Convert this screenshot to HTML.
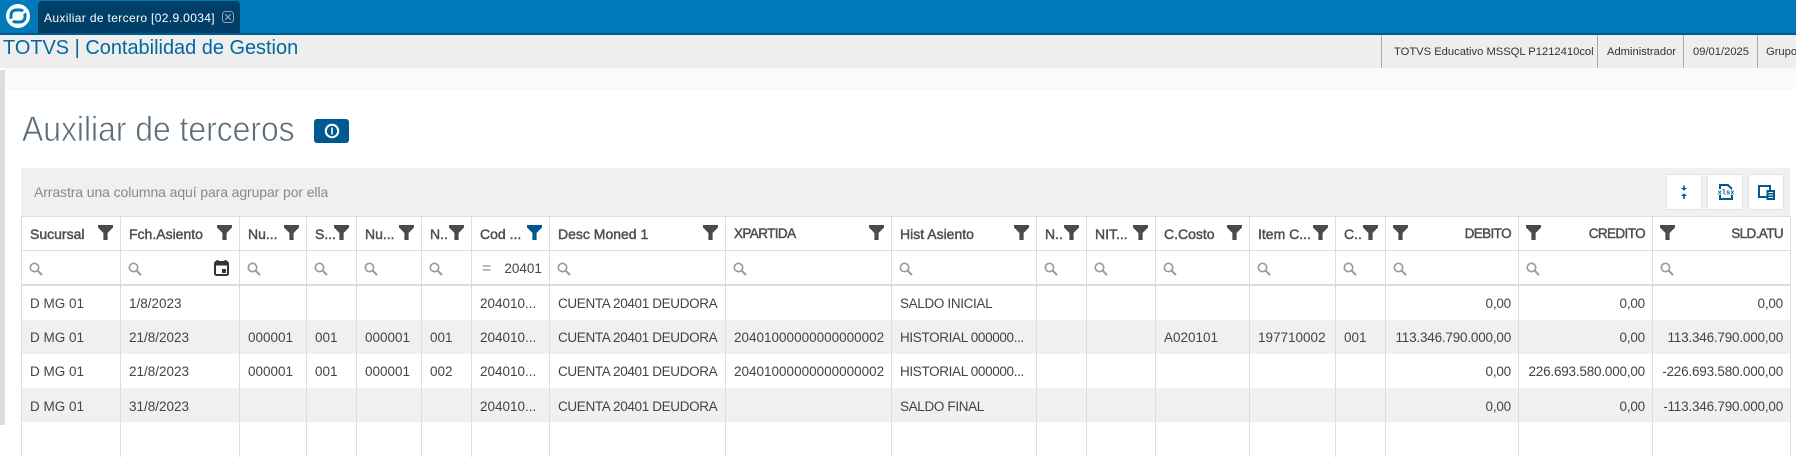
<!DOCTYPE html>
<html lang="es"><head><meta charset="utf-8"><title>Auxiliar de terceros</title>
<style>
*{box-sizing:border-box}
html,body{margin:0;padding:0}
body{width:1796px;height:425px;overflow:hidden;background:#fff;position:relative;font-family:"Liberation Sans",Arial,sans-serif}
.a{position:absolute}
#top{left:0;top:0;width:1796px;height:33px;background:#0079b8}
#line{left:0;top:33px;width:1796px;height:2px;background:#005a8c}
#tab{left:38px;top:1px;width:202px;height:32px;background:#004068;border-radius:4px 4px 0 0}
#tabt{left:44px;top:10px;color:#fff;font-size:12px;letter-spacing:.35px;white-space:nowrap;line-height:16px}
#bar{left:0;top:35px;width:1796px;height:33px;background:#eee}
#app{left:3px;top:37px;font-size:19.95px;line-height:22px;color:#0068a0;white-space:nowrap}
.sep{top:35px;width:1px;height:33px;background:#aaa;border-radius:2px}
.st{top:45px;font-size:11.2px;line-height:14px;color:#333;white-space:nowrap}
#band{left:5px;top:68px;width:1791px;height:22px;background:#fafafa}
#strip{left:0;top:70px;width:5px;height:355px;background:#ddd}
#title{left:22px;top:108px;font-size:35px;line-height:44px;color:#5a6d7a;white-space:nowrap;transform:scaleX(.91);transform-origin:0 0;-webkit-text-stroke:.7px #fff}
#info{left:314px;top:119px;width:35px;height:24px;background:#00598f;border-radius:3px}
#tb{left:21px;top:168px;width:1769px;height:48px;background:#f0f0f0}
#hint{left:34px;top:184px;font-size:14px;line-height:17px;color:#888;white-space:nowrap;letter-spacing:-.1px}
.btn{top:174px;width:36px;height:36px;background:#fff;border:1px solid #e2e2e2}
table{position:absolute;left:21px;top:216px;width:1769px;table-layout:fixed;border-collapse:collapse;font-size:13.5px;color:#444}
td,th{border-left:1px solid #ddd;border-right:1px solid #ddd;padding:0 7px 0 8px;white-space:nowrap;overflow:hidden;position:relative;text-align:left;font-weight:normal}
thead tr.h th{height:34px;border-top:1px solid #ddd;border-bottom:1px solid #ddd;font-weight:normal;color:#4f4f4f;font-size:14px;-webkit-text-stroke:.45px #4f4f4f}
thead tr.h th.c{font-size:13.5px;letter-spacing:-.6px}
thead tr.f th{height:34px;border-bottom:2px solid #ddd}
tbody td{height:34.3px;padding-top:2px}
tbody tr:first-child td{height:35px}
tbody tr:nth-child(even) td{background:#f0f0f0}
.r{text-align:right}
td.r{letter-spacing:-.2px}
.k{letter-spacing:-.35px}
svg{display:block}
.fn{position:absolute;top:8px;width:15px;height:15px;right:7px}
.fl{left:7px;right:auto}
.se{position:absolute;left:7px;top:11px;width:14px;height:14px}
</style></head><body>
<svg width="0" height="0" style="position:absolute"><defs>
<symbol id="fu" viewBox="0 0 15 15"><path d="M0 0H15V2.5L9.6 8V15H5.4V8L0 2.5Z"/></symbol>
<symbol id="sr" viewBox="0 0 14 14"><circle cx="5.5" cy="5.5" r="4.2" fill="none" stroke="#999" stroke-width="1.6"/><path d="M8.8 8.8L13 13" stroke="#999" stroke-width="2"/></symbol>
</defs></svg>
<div class="a" id="top"></div><div class="a" id="line"></div>
<svg class="a" style="left:6px;top:4px" width="24" height="24" viewBox="0 0 24 24"><circle cx="12" cy="12" r="12" fill="#fff"/><rect x="5" y="6" width="14" height="12" rx="5" fill="none" stroke="#0079b8" stroke-width="3"/><path d="M3.5 15.5L7.5 13.8L8.5 15.2L5.5 18.5Z" fill="#fff"/><path d="M20.5 8.5L16.5 10.2L15.5 8.8L18.5 5.5Z" fill="#fff"/></svg>
<div class="a" id="tab"></div>
<div class="a" id="tabt">Auxiliar de tercero [02.9.0034]</div>
<svg class="a" style="left:222px;top:11px" width="12" height="12" viewBox="0 0 12 12"><rect x=".5" y=".5" width="11" height="11" rx="3" fill="none" stroke="#8ba3b3"/><path d="M3.3 3.3L8.7 8.7M8.7 3.3L3.3 8.7" stroke="#8ba3b3" stroke-width="1.3"/></svg>
<div class="a" id="bar"></div>
<div class="a" id="app">TOTVS | Contabilidad de Gestion</div>
<div class="a sep" style="left:1381px"></div><div class="a sep" style="left:1597px"></div><div class="a sep" style="left:1683px"></div><div class="a sep" style="left:1757px"></div>
<div class="a st" style="left:1394px">TOTVS Educativo MSSQL P1212410col</div>
<div class="a st" style="left:1607px">Administrador</div>
<div class="a st" style="left:1693px">09/01/2025</div>
<div class="a st" style="left:1766px">Grupo</div>
<div class="a" id="band"></div><div class="a" id="strip"></div>
<div class="a" id="title">Auxiliar de terceros</div>
<div class="a" id="info"><svg style="margin:4px 0 0 10px" width="16" height="16" viewBox="0 0 16 16"><circle cx="8" cy="8" r="6.2" fill="none" stroke="#fff" stroke-width="2"/><rect x="7.2" y="4.5" width="1.6" height="7" fill="#fff"/></svg></div>
<div class="a" id="tb"></div>
<div class="a" id="hint">Arrastra una columna aquí para agrupar por ella</div>
<div class="a btn" style="left:1666px"><svg width="34" height="34" viewBox="0 0 34 34"><path d="M17 10.5V13" stroke="#00598f" stroke-width="1.6"/><path d="M14 13H20L17 15.8Z" fill="#00598f"/><path d="M17 21V24" stroke="#00598f" stroke-width="1.6"/><path d="M14 21H20L17 18.2Z" fill="#00598f"/></svg></div>
<div class="a btn" style="left:1707px"><svg width="34" height="34" viewBox="0 0 34 34"><path d="M12 14V10H20L24 14M12 20V24H24V20" fill="none" stroke="#00598f" stroke-width="2"/><text x="18" y="19.5" font-family="Liberation Mono" font-size="7" font-weight="bold" fill="#00598f" text-anchor="middle">xlsx</text></svg></div>
<div class="a btn" style="left:1748px"><svg width="34" height="34" viewBox="0 0 34 34"><path d="M10 11H21V22H10Z" fill="#fff" stroke="#00598f" stroke-width="2"/><rect x="17.5" y="15" width="8.5" height="10" fill="#00598f"/><path d="M19.5 17.5H24M19.5 20H24M19.5 22.5H24" stroke="#fff"/></svg></div>
<table>
<colgroup><col style="width:99px"><col style="width:119px"><col style="width:67px"><col style="width:50px"><col style="width:65px"><col style="width:50px"><col style="width:78px"><col style="width:176px"><col style="width:166px"><col style="width:145px"><col style="width:50px"><col style="width:69px"><col style="width:94px"><col style="width:86px"><col style="width:50px"><col style="width:133px"><col style="width:134px"><col style="width:138px"></colgroup>
<thead>
<tr class="h">
<th>Sucursal<svg class="fn" fill="#4a4a4a"><use href="#fu"/></svg></th>
<th>Fch.Asiento<svg class="fn" fill="#4a4a4a"><use href="#fu"/></svg></th>
<th>Nu...<svg class="fn" fill="#4a4a4a"><use href="#fu"/></svg></th>
<th>S...<svg class="fn" fill="#4a4a4a"><use href="#fu"/></svg></th>
<th>Nu...<svg class="fn" fill="#4a4a4a"><use href="#fu"/></svg></th>
<th>N..<svg class="fn" fill="#4a4a4a"><use href="#fu"/></svg></th>
<th>Cod ...<svg class="fn" fill="#00588f"><use href="#fu"/></svg></th>
<th>Desc Moned 1<svg class="fn" fill="#4a4a4a"><use href="#fu"/></svg></th>
<th class="c">XPARTIDA<svg class="fn" fill="#4a4a4a"><use href="#fu"/></svg></th>
<th>Hist Asiento<svg class="fn" fill="#4a4a4a"><use href="#fu"/></svg></th>
<th>N..<svg class="fn" fill="#4a4a4a"><use href="#fu"/></svg></th>
<th>NIT...<svg class="fn" fill="#4a4a4a"><use href="#fu"/></svg></th>
<th>C.Costo<svg class="fn" fill="#4a4a4a"><use href="#fu"/></svg></th>
<th>Item C...<svg class="fn" fill="#4a4a4a"><use href="#fu"/></svg></th>
<th>C..<svg class="fn" fill="#4a4a4a"><use href="#fu"/></svg></th>
<th class="r c"><svg class="fn fl" fill="#4a4a4a"><use href="#fu"/></svg>DEBITO</th>
<th class="r c"><svg class="fn fl" fill="#4a4a4a"><use href="#fu"/></svg>CREDITO</th>
<th class="r c"><svg class="fn fl" fill="#4a4a4a"><use href="#fu"/></svg>SLD.ATU</th>
</tr>
<tr class="f">
<th><svg class="se"><use href="#sr"/></svg></th>
<th><svg class="se"><use href="#sr"/></svg><svg style="position:absolute;right:10px;top:9px" width="15" height="16" viewBox="0 0 15 16"><path d="M3.5 0V2M11.5 0V2" stroke="#333" stroke-width="2"/><rect x="1" y="2" width="13" height="13" rx="1.5" fill="#fff" stroke="#333" stroke-width="2"/><rect x="1" y="2" width="13" height="3.5" fill="#333"/><rect x="8" y="9" width="4" height="4" fill="#333"/></svg></th>
<th><svg class="se"><use href="#sr"/></svg></th>
<th><svg class="se"><use href="#sr"/></svg></th>
<th><svg class="se"><use href="#sr"/></svg></th>
<th><svg class="se"><use href="#sr"/></svg></th>
<th style="font-size:13.5px;color:#444;padding:3px 0 0 10px"><span style="color:#888;font-size:16px;margin-right:13px">=</span>20401</th>
<th><svg class="se"><use href="#sr"/></svg></th>
<th><svg class="se"><use href="#sr"/></svg></th>
<th><svg class="se"><use href="#sr"/></svg></th>
<th><svg class="se"><use href="#sr"/></svg></th>
<th><svg class="se"><use href="#sr"/></svg></th>
<th><svg class="se"><use href="#sr"/></svg></th>
<th><svg class="se"><use href="#sr"/></svg></th>
<th><svg class="se"><use href="#sr"/></svg></th>
<th><svg class="se"><use href="#sr"/></svg></th>
<th><svg class="se"><use href="#sr"/></svg></th>
<th><svg class="se"><use href="#sr"/></svg></th>
</tr>
</thead>
<tbody>
<tr><td>D MG 01</td><td>1/8/2023</td><td></td><td></td><td></td><td></td><td>204010...</td><td class="k">CUENTA 20401 DEUDORA</td><td></td><td class="k">SALDO INICIAL</td><td></td><td></td><td></td><td></td><td></td><td class="r">0,00</td><td class="r">0,00</td><td class="r">0,00</td></tr>
<tr><td>D MG 01</td><td>21/8/2023</td><td>000001</td><td>001</td><td>000001</td><td>001</td><td>204010...</td><td class="k">CUENTA 20401 DEUDORA</td><td>20401000000000000002</td><td class="k">HISTORIAL 000000...</td><td></td><td></td><td>A020101</td><td>197710002</td><td>001</td><td class="r">113.346.790.000,00</td><td class="r">0,00</td><td class="r">113.346.790.000,00</td></tr>
<tr><td>D MG 01</td><td>21/8/2023</td><td>000001</td><td>001</td><td>000001</td><td>002</td><td>204010...</td><td class="k">CUENTA 20401 DEUDORA</td><td>20401000000000000002</td><td class="k">HISTORIAL 000000...</td><td></td><td></td><td></td><td></td><td></td><td class="r">0,00</td><td class="r">226.693.580.000,00</td><td class="r">-226.693.580.000,00</td></tr>
<tr><td>D MG 01</td><td>31/8/2023</td><td></td><td></td><td></td><td></td><td>204010...</td><td class="k">CUENTA 20401 DEUDORA</td><td></td><td class="k">SALDO FINAL</td><td></td><td></td><td></td><td></td><td></td><td class="r">0,00</td><td class="r">0,00</td><td class="r">-113.346.790.000,00</td></tr>
<tr><td></td><td></td><td></td><td></td><td></td><td></td><td></td><td></td><td></td><td></td><td></td><td></td><td></td><td></td><td></td><td></td><td></td><td></td></tr>
</tbody>
</table>
</body></html>
